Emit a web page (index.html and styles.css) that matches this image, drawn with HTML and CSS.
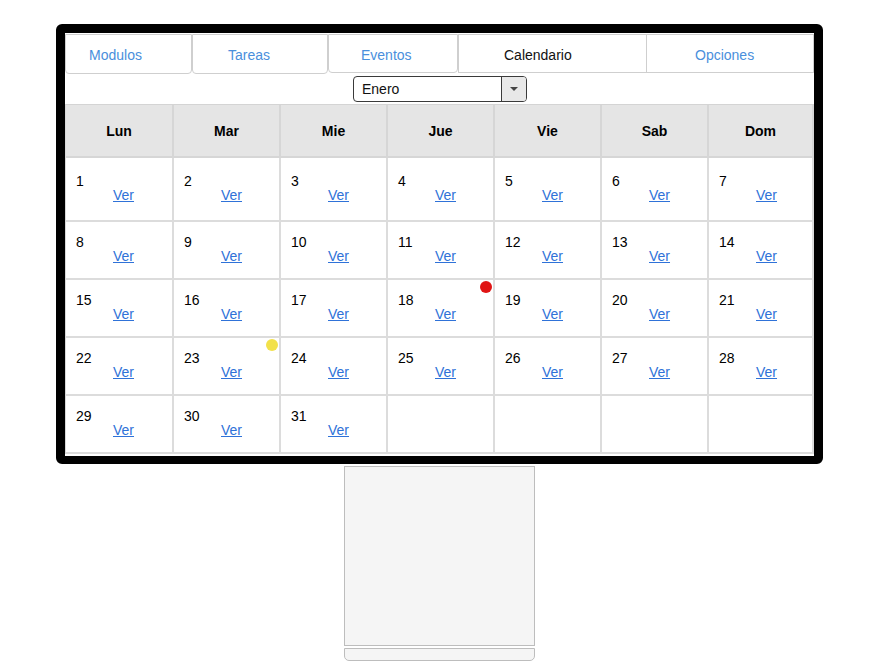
FILE: index.html
```html
<!DOCTYPE html>
<html lang="es">
<head>
<meta charset="utf-8">
<title>Calendario</title>
<link rel="stylesheet" href="styles.css">
</head>
<body>
<div class="scene">
  <div class="monitor">
    <div class="screen">
      <nav class="tabs">
        <a class="tab tab-modulos">Modulos</a>
        <a class="tab tab-tareas">Tareas</a>
        <a class="tab tab-eventos">Eventos</a>
        <a class="tab tab-calendario active">Calendario</a>
        <a class="tab tab-opciones">Opciones</a>
      </nav>
      <div class="toolbar">
        <div class="select"><span class="select-value">Enero</span><span class="select-arrow"></span></div>
      </div>
      <div class="cal">
        <div class="head">Lun</div><div class="head">Mar</div><div class="head">Mie</div><div class="head">Jue</div><div class="head">Vie</div><div class="head">Sab</div><div class="head">Dom</div>
        <div class="day"><span class="num">1</span><a class="ver">Ver</a></div>
        <div class="day"><span class="num">2</span><a class="ver">Ver</a></div>
        <div class="day"><span class="num">3</span><a class="ver">Ver</a></div>
        <div class="day"><span class="num">4</span><a class="ver">Ver</a></div>
        <div class="day"><span class="num">5</span><a class="ver">Ver</a></div>
        <div class="day"><span class="num">6</span><a class="ver">Ver</a></div>
        <div class="day"><span class="num">7</span><a class="ver">Ver</a></div>
        <div class="day"><span class="num">8</span><a class="ver">Ver</a></div>
        <div class="day"><span class="num">9</span><a class="ver">Ver</a></div>
        <div class="day"><span class="num">10</span><a class="ver">Ver</a></div>
        <div class="day"><span class="num">11</span><a class="ver">Ver</a></div>
        <div class="day"><span class="num">12</span><a class="ver">Ver</a></div>
        <div class="day"><span class="num">13</span><a class="ver">Ver</a></div>
        <div class="day"><span class="num">14</span><a class="ver">Ver</a></div>
        <div class="day"><span class="num">15</span><a class="ver">Ver</a></div>
        <div class="day"><span class="num">16</span><a class="ver">Ver</a></div>
        <div class="day"><span class="num">17</span><a class="ver">Ver</a></div>
        <div class="day"><span class="num">18</span><a class="ver">Ver</a></div>
        <div class="day"><span class="num">19</span><a class="ver">Ver</a></div>
        <div class="day"><span class="num">20</span><a class="ver">Ver</a></div>
        <div class="day"><span class="num">21</span><a class="ver">Ver</a></div>
        <div class="day"><span class="num">22</span><a class="ver">Ver</a></div>
        <div class="day"><span class="num">23</span><a class="ver">Ver</a></div>
        <div class="day"><span class="num">24</span><a class="ver">Ver</a></div>
        <div class="day"><span class="num">25</span><a class="ver">Ver</a></div>
        <div class="day"><span class="num">26</span><a class="ver">Ver</a></div>
        <div class="day"><span class="num">27</span><a class="ver">Ver</a></div>
        <div class="day"><span class="num">28</span><a class="ver">Ver</a></div>
        <div class="day"><span class="num">29</span><a class="ver">Ver</a></div>
        <div class="day"><span class="num">30</span><a class="ver">Ver</a></div>
        <div class="day"><span class="num">31</span><a class="ver">Ver</a></div>
        <div class="day empty"></div>
        <div class="day empty"></div>
        <div class="day empty"></div>
        <div class="day empty"></div>
      </div>
      <span class="dot dot-red"></span>
      <span class="dot dot-yellow"></span>
    </div>
  </div>
  <div class="stand"></div>
  <div class="base"></div>
</div>
</body>
</html>
```

FILE: styles.css
```css
* { box-sizing: border-box; }

html, body {
  margin: 0;
  background: #ffffff;
}

body {
  font-family: "Liberation Sans", Arial, sans-serif;
  font-size: 14px;
  color: #000;
}

.scene {
  width: 767px;
  margin-left: 56px;
  padding-top: 24px;
}

.monitor {
  width: 767px;
  height: 440px;
  border: 9px solid #000;
  border-bottom-width: 8px;
  border-radius: 6px;
  background: #fff;
}

.screen {
  position: relative;
  width: 749px;
  height: 423px;
  background: #fff;
  overflow: hidden;
}

/* tabs */
.tabs {
  display: flex;
  height: 41px;
  padding-top: 1px;
}

.tab {
  display: flex;
  align-items: center;
  height: 40px;
  padding-top: 2px;
  border: 1px solid #cfcfcf;
  border-radius: 0 0 4px 4px;
  color: #4a8fdc;
  font-size: 14px;
  background: #fff;
  cursor: pointer;
}

.tab-modulos { width: 127px; padding-left: 23px; }
.tab-tareas { width: 136px; padding-left: 35px; }
.tab-eventos { width: 130px; padding-left: 32px; height: 39px; }
.tab-calendario { width: 189px; padding-left: 45px; height: 39px; border-radius: 0; color: #111; }
.tab-opciones { width: 167px; padding-left: 48px; height: 39px; border-radius: 0; border-left: none; }

/* select */
.toolbar {
  height: 30px;
  display: flex;
  justify-content: center;
  padding-top: 2px;
}

.select {
  display: flex;
  width: 174px;
  height: 26px;
  border: 1px solid #3a3a3a;
  border-radius: 4px;
  overflow: hidden;
  margin-left: 1px;
}

.select-value {
  flex: 1;
  display: flex;
  align-items: center;
  padding-left: 8px;
  font-size: 14px;
  color: #111;
}

.select-arrow {
  position: relative;
  width: 25px;
  border-left: 1px solid #3a3a3a;
  background: #e8e8e8;
}

.select-arrow::after {
  content: "";
  position: absolute;
  left: 8px;
  top: 10px;
  border-left: 4px solid transparent;
  border-right: 4px solid transparent;
  border-top: 4px solid #444;
}

/* calendar grid */
.cal {
  display: grid;
  grid-template-columns: 108px repeat(5, 107px) 1fr;
  grid-template-rows: 53px 64px repeat(4, 58px);
  border-top: 1px solid #d4d4d4;
  border-left: 1px solid #d8d8d8;
}

.head {
  display: flex;
  align-items: center;
  justify-content: center;
  background: #e5e5e5;
  font-weight: bold;
  font-size: 14px;
  border-right: 2px solid #d6d6d6;
  border-bottom: 2px solid #d6d6d6;
}

.day {
  display: flex;
  flex-direction: column;
  justify-content: center;
  border-right: 2px solid #dcdcdc;
  border-bottom: 2px solid #dcdcdc;
  padding-left: 10px;
  padding-bottom: 2px;
  line-height: 14px;
}

.num {
  display: block;
  font-size: 14px;
  color: #000;
}

.ver {
  display: block;
  margin-left: 37px;
  font-size: 14px;
  color: #2f72d8;
  text-decoration: underline;
  cursor: pointer;
}

/* markers */
.dot {
  position: absolute;
  width: 12px;
  height: 12px;
  border-radius: 50%;
}

.dot-red { left: 415px; top: 248px; background: #e01414; }
.dot-yellow { left: 201px; top: 306px; background: #f2e14a; }

/* stand */
.stand {
  width: 191px;
  height: 180px;
  margin: 2px auto 0;
  background: #f5f5f5;
  border: 1px solid #bdbdbd;
}

.base {
  width: 191px;
  height: 13px;
  margin: 2px auto 0;
  background: #f5f5f5;
  border: 1px solid #bdbdbd;
  border-radius: 0 0 5px 5px;
}
```
